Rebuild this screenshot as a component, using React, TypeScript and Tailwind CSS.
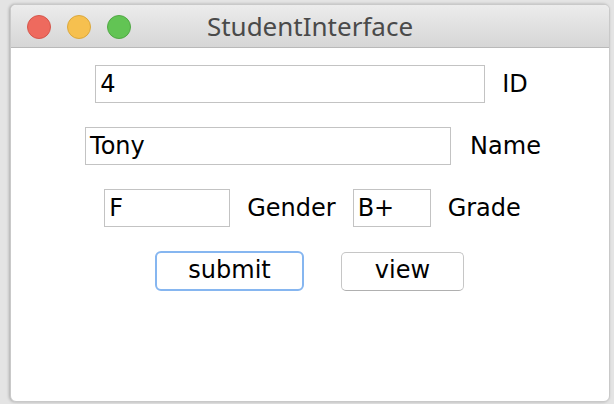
import React from "react";

const font = { fontFamily: '"DejaVu Sans", Verdana, sans-serif' };

function Field({ w, value }: { w: string; value: string }) {
  return (
    <div
      className={`${w} h-[38px] border border-[#c3c3c3] bg-white flex items-center pl-[4px] text-[24px] text-black leading-none`}
    >
      {value}
    </div>
  );
}

export default function App() {
  return (
    <div
      className="w-[614px] h-[404px] bg-[#e4e4e4] pl-[10px] pt-[4px] overflow-hidden"
      style={font}
    >
      <div className="w-[600px] h-[398px] rounded-[6px] overflow-hidden bg-white shadow-[-1px_0_3px_rgba(0,0,0,0.25)] border border-[#c9c9c9] flex flex-col">
        <div className="h-[43px] shrink-0 bg-gradient-to-b from-[#ececec] to-[#d6d6d6] border-b border-[#b9b9b9] relative flex items-center justify-center">
          <div className="absolute left-[16px] top-[10px] flex gap-[16px]">
            <span className="w-[24px] h-[24px] rounded-full bg-[#ee6a5e] border border-[#d5574c]" />
            <span className="w-[24px] h-[24px] rounded-full bg-[#f6c04f] border border-[#dba83c]" />
            <span className="w-[24px] h-[24px] rounded-full bg-[#62c454] border border-[#51a845]" />
          </div>
          <span
            className="text-[26px] text-[#4a4a4a] leading-none"
            style={{ fontFamily: '"Noto Sans", "Open Sans", sans-serif' }}
          >
            StudentInterface
          </span>
        </div>
        <div className="flex flex-col items-center pt-[17px] text-[24px] text-black">
          <div className="flex items-center gap-[17px] h-[38px] ml-[3px]">
            <Field w="w-[390px]" value="4" />
            <span>ID</span>
          </div>
          <div className="flex items-center gap-[19px] h-[38px] mt-[24px] ml-[6px]">
            <Field w="w-[366px]" value="Tony" />
            <span>Name</span>
          </div>
          <div className="flex items-center h-[38px] mt-[24px] ml-[5px]">
            <Field w="w-[126px]" value="F" />
            <span className="ml-[17px]">Gender</span>
            <div className="ml-[17px]">
              <Field w="w-[78px]" value="B+" />
            </div>
            <span className="ml-[17px]">Grade</span>
          </div>
          <div className="flex items-center gap-[37px] mt-[24px] -ml-[1px]">
            <button className="w-[149px] h-[40px] rounded-[6px] border-2 border-[#86b6f0] bg-white text-[24px] leading-none pb-[2px]">
              submit
            </button>
            <button className="w-[123px] h-[39px] rounded-[5px] border border-[#c6c6c6] border-b-[#b0b0b0] bg-white text-[24px] leading-none pb-[2px]">
              view
            </button>
          </div>
        </div>
      </div>
    </div>
  );
}
